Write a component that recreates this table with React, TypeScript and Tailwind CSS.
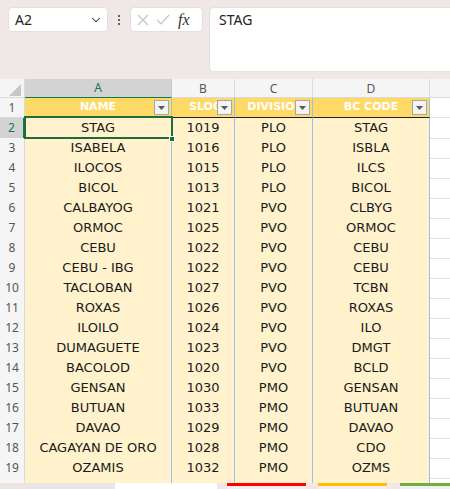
import { ChevronDown } from 'lucide-react'

const rows: string[][] = [
  ['STAG', '1019', 'PLO', 'STAG'],
  ['ISABELA', '1016', 'PLO', 'ISBLA'],
  ['ILOCOS', '1015', 'PLO', 'ILCS'],
  ['BICOL', '1013', 'PLO', 'BICOL'],
  ['CALBAYOG', '1021', 'PVO', 'CLBYG'],
  ['ORMOC', '1025', 'PVO', 'ORMOC'],
  ['CEBU', '1022', 'PVO', 'CEBU'],
  ['CEBU - IBG', '1022', 'PVO', 'CEBU'],
  ['TACLOBAN', '1027', 'PVO', 'TCBN'],
  ['ROXAS', '1026', 'PVO', 'ROXAS'],
  ['ILOILO', '1024', 'PVO', 'ILO'],
  ['DUMAGUETE', '1023', 'PVO', 'DMGT'],
  ['BACOLOD', '1020', 'PVO', 'BCLD'],
  ['GENSAN', '1030', 'PMO', 'GENSAN'],
  ['BUTUAN', '1033', 'PMO', 'BUTUAN'],
  ['DAVAO', '1029', 'PMO', 'DAVAO'],
  ['CAGAYAN DE ORO', '1028', 'PMO', 'CDO'],
  ['OZAMIS', '1032', 'PMO', 'OZMS'],
  ['ZAMBOANGA', '1031', 'PMO', 'ZMBO'],
]

const headers = ['NAME', 'SLOC', 'DIVISION', 'BC CODE']
const cols = 'grid grid-cols-[25px_147px_63px_78px_117px_1fr]'

function FilterButton() {
  return (
    <div className="absolute right-[2px] top-[2px] w-[15px] h-[15px] bg-[#f3f3f3] border border-[#a6a6a6] flex items-center justify-center">
      <svg width="7" height="4" viewBox="0 0 7 4">
        <path d="M0 0h7L3.5 4z" fill="#595959" />
      </svg>
    </div>
  )
}

export default function App() {
  return (
    <div className="relative w-[450px] h-[489px] overflow-hidden bg-white font-['Noto_Sans',sans-serif]">
      {/* Formula bar */}
      <div className="h-[79px] bg-[#f0e8e6] flex items-start pl-2 pt-[7px] gap-[6px]">
        <div className="w-[100px] h-[25px] bg-white rounded-[4px] border border-[#e6dedc] flex items-center justify-between pl-[6px] pr-[4px] text-[14px] text-[#222]">
          <span>A2</span>
          <ChevronDown size={14} strokeWidth={1.8} className="text-[#333]" />
        </div>
        <div className="w-[10px] h-[25px] flex flex-col items-center justify-center gap-[2px]">
          <span className="w-[2px] h-[2px] bg-[#333] rounded-full" />
          <span className="w-[2px] h-[2px] bg-[#333] rounded-full" />
          <span className="w-[2px] h-[2px] bg-[#333] rounded-full" />
        </div>
        <div className="w-[73px] h-[25px] bg-white rounded-[4px] border border-[#e6dedc] flex items-center pl-[6px] pr-[3px] gap-[7px]">
          <svg width="12" height="12" viewBox="0 0 12 12" stroke="#c4c4c4" strokeWidth="1.2">
            <path d="M1 1l10 10M11 1L1 11" />
          </svg>
          <svg width="14" height="11" viewBox="0 0 14 11" fill="none" stroke="#c4c4c4" strokeWidth="1.2">
            <path d="M1 6l4 4L13 1" />
          </svg>
          <span className="italic text-[16px] leading-none text-[#333] font-['Liberation_Serif',serif] ml-[1px]">fx</span>
        </div>
        <div className="flex-1 h-[65px] bg-white rounded-l-[5px] border border-r-0 border-[#e6dedc] pl-[9px] pt-[1px] text-[14px] text-[#222]">
          STAG
        </div>
      </div>

      {/* Column headers */}
      <div className={`${cols} h-[19px] bg-[#f5f5f5] text-[12px] text-[#555] border-b border-[#dadada]`}>
        <div className="relative border-r border-[#dadada]">
          <svg className="absolute right-[3px] bottom-[3px]" width="12" height="12" viewBox="0 0 12 12">
            <path d="M12 0v12H0z" fill="#c6c6c6" />
          </svg>
        </div>
        <div className="bg-[#d3d3d3] text-[#107c41] border-b-2 border-[#107c41] flex items-center justify-center border-r border-r-[#c6c6c6]">A</div>
        <div className="flex items-center justify-center border-r border-[#dadada]">B</div>
        <div className="flex items-center justify-center border-r border-[#dadada]">C</div>
        <div className="flex items-center justify-center border-r border-[#dadada]">D</div>
        <div />
      </div>

      {/* Header row */}
      <div className={`${cols} h-[20px] font-['DejaVu_Sans',sans-serif] text-[11px]`}>
        <div className="bg-[#f5f5f5] border-r border-b border-[#dadada] flex items-center justify-center text-[12px] text-[#555] font-['Noto_Sans',sans-serif]">1</div>
        {headers.map((h, i) => (
          <div key={h} className="relative bg-[#ffd966] border-r border-[#9bc2e6] border-b border-b-[#1f1f1f] flex items-center justify-center overflow-hidden whitespace-nowrap text-white font-bold">
            <span className={i === 1 || i === 2 ? 'pl-[4px]' : ''}>{h}</span>
            <FilterButton />
          </div>
        ))}
        <div className="border-b border-[#e1e1e1]" />
      </div>

      {/* Data rows */}
      {rows.map((r, idx) => {
        const n = idx + 2
        const sel = n === 2
        return (
          <div key={n} className={`${cols} h-[20px] font-['DejaVu_Sans',sans-serif] text-[13px] text-[#1a1a1a]`}>
            <div
              className={`flex items-center justify-center text-[12px] font-['Noto_Sans',sans-serif] border-b border-[#dadada] ${
                sel ? 'bg-[#d3d3d3] text-[#107c41] border-r-2 border-r-[#107c41]' : 'bg-[#f5f5f5] text-[#555] border-r border-r-[#dadada]'
              }`}
            >
              {n}
            </div>
            {r.map((c, j) => (
              <div
                key={j}
                className={`relative bg-[#fff2cc] border-r border-b border-[#9bc2e6] flex items-center justify-center whitespace-nowrap ${
                  sel && j === 0 ? 'z-10' : ''
                }`}
              >
                {c}
                {sel && j === 0 && (
                  <>
                    <div className="absolute -left-px -top-[2px] -right-[2px] -bottom-px border-2 border-[#1e6b3e]" />
                    <div className="absolute -right-[4px] -bottom-[4px] w-[6px] h-[6px] bg-[#1e6b3e] border border-white" />
                  </>
                )}
              </div>
            ))}
            <div className="border-b border-[#e1e1e1]" />
          </div>
        )
      })}

      {/* Sheet tabs strip */}
      <div className="absolute left-0 right-0 top-[483px] h-[6px] flex bg-[#efe8e6]">
        <div className="w-[115px] bg-[#ebe5e3]" />
        <div className="w-[102px] bg-white" />
        <div className="w-[10px]" />
        <div className="w-[79px] border-t-[3px] border-[#ff0000] bg-[#f3efee]" />
        <div className="w-[12px]" />
        <div className="w-[69px] border-t-[3px] border-[#ffc000] bg-[#f3efee]" />
        <div className="w-[13px]" />
        <div className="flex-1 border-t-[3px] border-[#70ad47] bg-[#f3efee]" />
      </div>
    </div>
  )
}
